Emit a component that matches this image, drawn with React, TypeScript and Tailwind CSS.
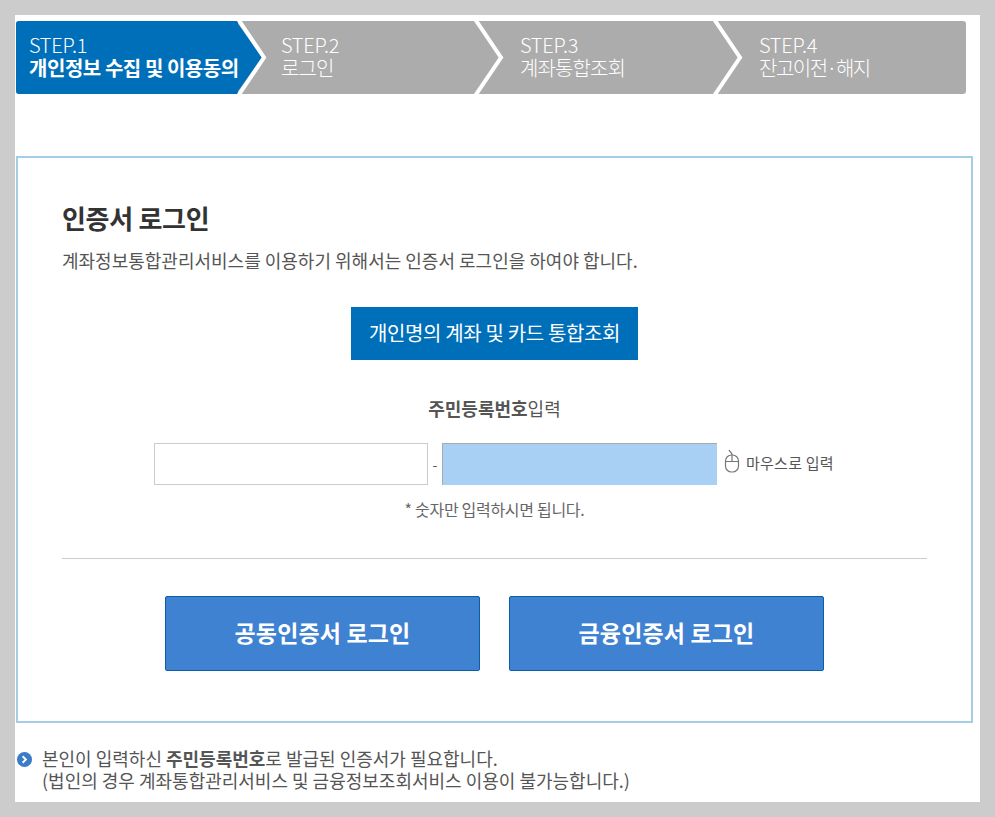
const font = { fontFamily: '"Noto Sans CJK KR", "Noto Sans", sans-serif' };

function Chevron({ fill }: { fill?: string }) {
    return (
        <svg width="33" height="73" viewBox="0 0 33 73" className="absolute top-0 -right-[31px] z-10">
            {fill && <polygon points="0,0 26,36.5 0,73" fill={fill} />}
            <polyline points="2,-2 28,36.5 2,75" fill="none" stroke="#fff" strokeWidth="4" />
        </svg>
    );
}

const steps = [
    { no: 'STEP.1', name: '개인정보 수집 및 이용동의', cls: 'w-[222px] pl-[13px] bg-[#006fba] rounded-l-[3px]', nameCls: 'font-bold tracking-[-0.45px]', active: true },
    { no: 'STEP.2', name: '로그인', cls: 'w-[237px] pl-[43px]', nameCls: 'font-light tracking-[-0.9px]' },
    { no: 'STEP.3', name: '계좌통합조회', cls: 'w-[239px] pl-[45px]', nameCls: 'font-light tracking-[-0.9px]' },
    { no: 'STEP.4', name: '잔고이전·해지', cls: 'flex-1 pl-[45px]', nameCls: 'font-light tracking-[-1.5px]' },
];

export default function App() {
    return (
        <div style={font} className="h-[817px] bg-[#cccccc] pt-[15px] pl-[15px] pr-[15px] overflow-hidden">
            <div className="w-[965px] h-[787px] bg-white pt-[6px] pl-px">
                {/* steps */}
                <div className="flex w-[950px] h-[73px] bg-[#acacac] rounded-[3px] text-white">
                    {steps.map((s) => (
                        <div key={s.no} className={`relative h-full pt-[12px] text-[20px] leading-[23px] ${s.cls}`}>
                            <div className="font-light tracking-[-0.3px]">{s.no}</div>
                            <div className={`relative z-20 whitespace-nowrap ${s.nameCls}`}>{s.name}</div>
                            {s.no !== 'STEP.4' && <Chevron fill={s.active ? '#006fba' : undefined} />}
                        </div>
                    ))}
                </div>

                {/* login box */}
                <div className="mt-[62px] w-[957px] h-[567px] border-2 border-[#a5cde5] px-[44px] pt-[42px]">
                    <h1 className="text-[26px] leading-[36px] font-bold text-[#333] tracking-[-0.3px]">인증서 로그인</h1>
                    <p className="mt-[11px] text-[18px] leading-[26px] text-[#555] whitespace-nowrap">계좌정보통합관리서비스를 이용하기 위해서는 인증서 로그인을 하여야 합니다.</p>

                    <div className="mt-[34px] flex justify-center">
                        <button className="w-[287px] h-[53px] pb-[2px] bg-[#006fba] text-white text-[20px] tracking-[-0.35px]">개인명의 계좌 및 카드 통합조회</button>
                    </div>

                    <div className="mt-[35px] text-center text-[18px] leading-[26px] text-[#555]">
                        <b className="font-bold">주민등록번호</b>입력
                    </div>

                    <div className="mt-[22px] ml-[92px] flex items-center h-[42px]">
                        <div className="w-[274px] h-full border border-[#cccccc] bg-white" />
                        <span className="w-[14px] text-center text-[14px] text-[#555]">-</span>
                        <div className="w-[275px] h-full bg-[#a8d0f5] border-l border-t border-[#aaaaaa]" />
                        <svg width="18" height="24" viewBox="0 0 18 24" className="ml-[6px] -mt-[7px]" fill="none" stroke="#777" strokeWidth="1.2">
                            <rect x="2.5" y="6" width="13" height="17" rx="6" />
                            <path d="M2.5 12.5h13M9 6v6.5M9 6C9 3 7 3.5 6 1" />
                        </svg>
                        <span className="ml-[5px] -mt-[2px] text-[15px] text-[#555] tracking-[0.25px] whitespace-nowrap">마우스로 입력</span>
                    </div>

                    <p className="mt-[13px] text-center text-[16px] leading-[22px] text-[#666] tracking-[-0.3px]">* 숫자만 입력하시면 됩니다.</p>

                    <hr className="mt-[38px] border-[#cccccc]" />

                    <div className="mt-[37px] flex justify-center gap-[29px]">
                        <button className="w-[315px] h-[75px] pb-[3px] bg-[#3f82d1] border border-[#0a5ea8] rounded-[2px] text-white text-[23px] font-bold tracking-[0.15px]">공동인증서 로그인</button>
                        <button className="w-[315px] h-[75px] pb-[3px] bg-[#3f82d1] border border-[#0a5ea8] rounded-[2px] text-white text-[23px] font-bold tracking-[0.15px]">금융인증서 로그인</button>
                    </div>
                </div>

                {/* notice */}
                <div className="mt-[25px] flex gap-[10px] pl-px text-[18px] leading-[22px] text-[#555]">
                    <svg width="15" height="15" viewBox="0 0 16 16" className="mt-[4px] shrink-0">
                        <circle cx="8" cy="8" r="8" fill="#3a7cc8" />
                        <path d="M6 4.5 9.5 8 6 11.5" fill="none" stroke="#fff" strokeWidth="2" />
                    </svg>
                    <p className="whitespace-nowrap -mt-[1px]">
                        본인이 입력하신 <b className="font-bold">주민등록번호</b>로 발급된 인증서가 필요합니다.<br />
                        (법인의 경우 계좌통합관리서비스 및 금융정보조회서비스 이용이 불가능합니다.)
                    </p>
                </div>
            </div>
        </div>
    );
}
